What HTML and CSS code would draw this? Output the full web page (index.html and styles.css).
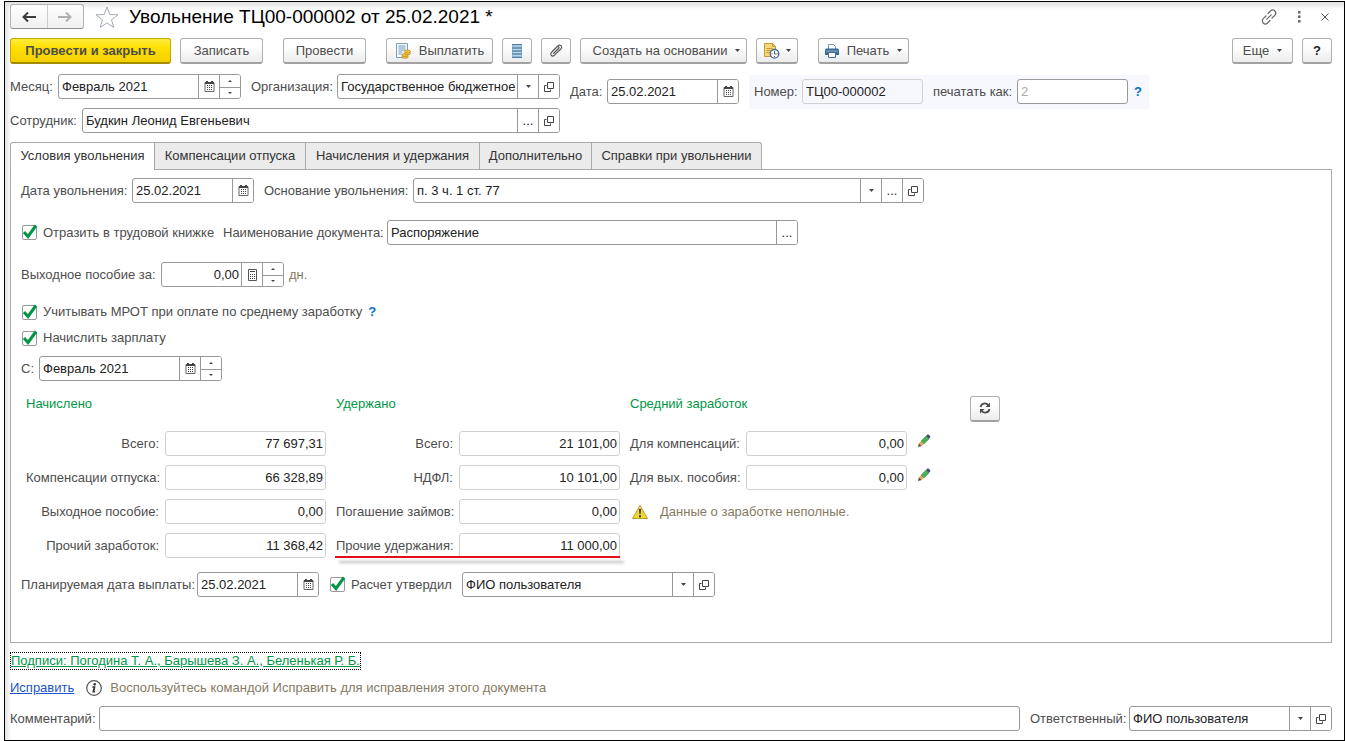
FILE: index.html
```html
<!DOCTYPE html>
<html lang="ru">
<head>
<meta charset="utf-8">
<meta name="viewport" content="width=device-width, initial-scale=1">
<title>Увольнение ТЦ00-000002</title>
<link rel="stylesheet" href="styles.css">
</head>
<body>
<svg class="sprite" aria-hidden="true">
  <symbol id="i-cal" viewBox="0 0 11 11"><path d="M1 1.500h9v9H1z" fill="#fff" stroke="#666"/><path d="M1 1h9v2H1zM2 0h2v2H2zM7 0h2v2H7z" fill="#444"/><path d="M3 4h1v1H3zM5 4h1v1H5zM7 4h1v1H7zM3 6h1v1H3zM5 6h1v1H5zM7 6h1v1H7zM3 8h1v1H3zM5 8h1v1H5zM7 8h1v1H7z" fill="#444"/></symbol>
  <symbol id="i-calc" viewBox="0 0 11 12"><path d="M1.500.5h8v11h-8z" fill="#fff" stroke="#555"/><path d="M3 2h5v1H3zM3 5h1v1H3zM5 5h1v1H5zM7 5h1v1H7zM3 7h1v1H3zM5 7h1v1H5zM7 7h1v1H7zM3 9h1v1H3zM5 9h1v1H5zM7 9h1v1H7z" fill="#444"/></symbol>
  <symbol id="i-open" viewBox="0 0 10 10"><path d="M3.500.5h6v6h-6z" fill="none" stroke="#444"/><path d="M2.500 3.500h-2v6h6v-2" fill="none" stroke="#444"/></symbol>
  <symbol id="i-down" viewBox="0 0 5 3"><path d="M0 0h5L2.500 3z" fill="#444"/></symbol>
  <symbol id="i-tick" viewBox="0 0 17 17"><path d="M3 8l4 4.500L15 1.500" fill="none" stroke="#009646" stroke-width="3"/></symbol>
  <symbol id="i-pencil" viewBox="0 0 14 14"><path d="M1 13l1-4 3 3z" fill="#5b4a3c"/><path d="M2 9.500L4 7l3 3-2.500 2z" fill="#eba757"/><path d="M4 7l5-5 3 3-5 5z" fill="#4caf57" stroke="#37914a" stroke-width=".5"/><path d="M9 2l1.500-1.500Q11 0 12 1l1 1q1 1 0 1.500L12 5z" fill="#41506b"/></symbol>
</svg>
<main class="window">
  <header class="titlebar">
    <div class="nav">
      <button type="button" aria-label="Назад"><svg width="14" height="10" viewBox="0 0 14 10"><path d="M6 .5L1.500 5 6 9.500M2 5h12" fill="none" stroke="#3c3c3c" stroke-width="2"/></svg></button>
      <button type="button" aria-label="Вперед"><svg width="14" height="10" viewBox="0 0 14 10"><path d="M8 .5L12.500 5 8 9.500M12 5H0" fill="none" stroke="#b0b0b0" stroke-width="2"/></svg></button>
    </div>
    <svg class="star" width="24" height="22" viewBox="0 0 24 22"><path d="M12 1l2.800 7.500 8.200.3-6.500 5 2.300 7.600L12 16.900l-6.800 4.500 2.300-7.600-6.500-5 8.200-.3z" fill="#fff" stroke="#a3acb5"/></svg>
    <h1>Увольнение ТЦ00-000002 от 25.02.2021 *</h1>
    <div class="winicons">
      <button type="button" aria-label="Ссылка"><svg width="16" height="16" viewBox="0 0 16 16"><g fill="none" stroke="#666" stroke-width="1.200" stroke-linecap="round"><path d="M7 4.500l2.500-2.500a3 3 0 0 1 4.300 4.300L11 9"/><path d="M9 11.500L6.500 14a3 3 0 0 1-4.300-4.300L5 7"/><path d="M5.800 10.200l4.400-4.400"/></g></svg></button>
      <button type="button" aria-label="Меню"><svg width="4" height="12" viewBox="0 0 4 12"><path d="M1 0h2.500v2.500H1zM1 4.500h2.500V7H1zM1 9h2.500v2.500H1z" fill="#666"/></svg></button>
      <button type="button" aria-label="Закрыть"><svg width="8" height="8" viewBox="0 0 8 8"><path d="M.5.5l7 7M7.500.5l-7 7" stroke="#555" fill="none"/></svg></button>
    </div>
  </header>

  <div class="toolbar">
    <div class="group">
      <button type="button" class="btn primary">Провести и закрыть</button>
      <button type="button" class="btn medium">Записать</button>
    </div>
    <button type="button" class="btn medium">Провести</button>
    <div class="group">
      <button type="button" class="btn pay"><svg width="16" height="16" viewBox="0 0 16 16"><path d="M1.500.5h11v14h-11z" fill="#f3f9fd" stroke="#7f9fb6"/><path d="M3.500 3h7M3.500 5h7M3.500 7h7M3.500 9h4M3.500 11h3" stroke="#6f9bbb"/><g fill="#f5c542" stroke="#b98416" stroke-width=".7"><ellipse cx="10" cy="13.800" rx="3.200" ry="1.500"/><ellipse cx="10" cy="12" rx="3.200" ry="1.500"/><ellipse cx="12.500" cy="10.300" rx="3" ry="1.500"/><ellipse cx="12.500" cy="8.500" rx="3" ry="1.500"/></g></svg>Выплатить</button>
      <button type="button" class="btn square" aria-label="Реестр"><svg width="10" height="14" viewBox="0 0 10 14"><path d="M0 0h10v14H0z" fill="#8fb6d3"/><path d="M0 .5h10M0 4h10M0 7h10M0 10h10M0 13.500h10" stroke="#4d7ea6"/><path d="M1 2h8M1 5.500h8M1 8.500h8M1 11.500h8" stroke="#b9d6ea"/></svg></button>
      <button type="button" class="btn square" aria-label="Файлы"><svg width="14" height="14" viewBox="0 0 14 14"><path d="M4.500 9.500l5-5q1-1 .2-1.700t-1.800.2L2.700 8.200q-1.600 1.800-.4 3.200t3.200-.2l6.200-6.200q1.800-1.900.3-3.300t-3.400.4L3.500 7.200" fill="none" stroke="#555" stroke-width="1.100" stroke-linecap="round"/></svg></button>
      <button type="button" class="btn create">Создать на основании<svg width="5" height="3"><use href="#i-down"/></svg></button>
      <button type="button" class="btn history" aria-label="Напоминания"><svg width="17" height="16" viewBox="0 0 17 16"><path d="M1.500.5h8l3 3v10h-11z" fill="#f6d778" stroke="#c09a3c"/><path d="M9.500.5v3h3M3.500 5.500h6M3.500 7.500h4M3.500 9.500h3" fill="none" stroke="#c09a3c"/><circle cx="11.500" cy="10.800" r="4.300" fill="#fff" stroke="#3f6c9c" stroke-width="1.300"/><path d="M11.500 8v3h2" fill="none" stroke="#3f6c9c"/><path d="M8.500 10.300h1v1h-1zM11 13h1v1h-1zM13.800 10.300h1v1h-1z" fill="#e23"/></svg><svg width="5" height="3"><use href="#i-down"/></svg></button>
    </div>
    <button type="button" class="btn print"><svg width="14" height="14" viewBox="0 0 14 14"><path d="M3.500 5V.5h5l2 2V5" fill="#fff" stroke="#7795ad"/><path d="M1 4.500h12l1 1V11H0V5.500z" fill="#3d6b93"/><path d="M1 7h12" stroke="#8db2d0"/><path d="M3.500 8.500h7v5h-7z" fill="#fff" stroke="#4a6d8c"/></svg>Печать<svg width="5" height="3"><use href="#i-down"/></svg></button>
    <div class="group end">
      <button type="button" class="btn more">Еще<svg width="5" height="3"><use href="#i-down"/></svg></button>
      <button type="button" class="btn square help">?</button>
    </div>
  </div>

  <section class="head">
    <div class="head-main">
      <div class="line line-month">
        <label for="month">Месяц:</label>
        <div class="field"><input id="month" value="Февраль 2021"><button type="button" aria-label="Календарь"><svg width="11" height="11"><use href="#i-cal"/></svg></button><span class="spin"><button type="button" aria-label="Больше"></button><button type="button" aria-label="Меньше"></button></span></div>
        <label for="org" class="next">Организация:</label>
        <div class="field"><span class="combo"><select id="org"><option>Государственное бюджетное</option></select><span class="arrow"><svg width="5" height="3"><use href="#i-down"/></svg></span></span><button type="button" aria-label="Открыть"><svg width="10" height="10"><use href="#i-open"/></svg></button></div>
      </div>
      <div class="line line-person">
        <label for="person">Сотрудник:</label>
        <div class="field"><input id="person" value="Будкин Леонид Евгеньевич"><button type="button">...</button><button type="button" aria-label="Открыть"><svg width="10" height="10"><use href="#i-open"/></svg></button></div>
      </div>
    </div>
    <div class="line line-date">
      <label for="date">Дата:</label>
      <div class="field"><input id="date" value="25.02.2021"><button type="button" aria-label="Календарь"><svg width="11" height="11"><use href="#i-cal"/></svg></button></div>
    </div>
    <div class="line line-number">
      <label for="num">Номер:</label>
      <div class="field soft"><input id="num" value="ТЦ00-000002" readonly></div>
      <label for="printas" class="next">печатать как:</label>
      <div class="field"><input id="printas" placeholder="2"></div>
      <a class="hint" href="#">?</a>
    </div>
  </section>

  <nav class="tabs" role="tablist">
    <button type="button" role="tab" class="active" aria-selected="true">Условия увольнения</button>
    <button type="button" role="tab">Компенсации отпуска</button>
    <button type="button" role="tab">Начисления и удержания</button>
    <button type="button" role="tab">Дополнительно</button>
    <button type="button" role="tab">Справки при увольнении</button>
  </nav>

  <section class="panel">
    <div class="line line-dismiss">
      <label for="ddate">Дата увольнения:</label>
      <div class="field"><input id="ddate" value="25.02.2021"><button type="button" aria-label="Календарь"><svg width="11" height="11"><use href="#i-cal"/></svg></button></div>
      <label for="reason" class="next">Основание увольнения:</label>
      <div class="field"><span class="combo"><select id="reason"><option>п. 3 ч. 1 ст. 77</option></select><span class="arrow"><svg width="5" height="3"><use href="#i-down"/></svg></span></span><button type="button">...</button><button type="button" aria-label="Открыть"><svg width="10" height="10"><use href="#i-open"/></svg></button></div>
    </div>
    <div class="line line-book">
      <label class="check"><span class="box"><input type="checkbox" checked><svg width="17" height="17"><use href="#i-tick"/></svg></span>Отразить в трудовой книжке</label>
      <label for="doc" class="next">Наименование документа:</label>
      <div class="field"><input id="doc" value="Распоряжение"><button type="button">...</button></div>
    </div>
    <div class="line line-severance">
      <label for="sev">Выходное пособие за:</label>
      <div class="field num"><input id="sev" value="0,00"><button type="button" aria-label="Калькулятор"><svg width="11" height="12"><use href="#i-calc"/></svg></button><span class="spin"><button type="button" aria-label="Больше"></button><button type="button" aria-label="Меньше"></button></span></div>
      <span class="unit">дн.</span>
    </div>
    <div class="checks">
      <div class="inline"><label class="check"><span class="box"><input type="checkbox" checked><svg width="17" height="17"><use href="#i-tick"/></svg></span>Учитывать МРОТ при оплате по среднему заработку</label><a class="hint" href="#">?</a></div>
      <label class="check"><span class="box"><input type="checkbox" checked><svg width="17" height="17"><use href="#i-tick"/></svg></span>Начислить зарплату</label>
    </div>
    <div class="line line-from">
      <label for="from">С:</label>
      <div class="field"><input id="from" value="Февраль 2021"><button type="button" aria-label="Календарь"><svg width="11" height="11"><use href="#i-cal"/></svg></button><span class="spin"><button type="button" aria-label="Больше"></button><button type="button" aria-label="Меньше"></button></span></div>
    </div>

    <div class="totals">
      <h2 class="c1">Начислено</h2><h2 class="c3">Удержано</h2><h2 class="c5">Средний заработок</h2>
      <button type="button" class="btn square refresh" aria-label="Обновить"><svg width="12" height="12" viewBox="0 0 12 12"><path d="M1.500 5a4.300 4.300 0 0 1 7.800-1.700M10.500 7a4.300 4.300 0 0 1-7.800 1.700" fill="none" stroke="#4d4d4d" stroke-width="1.800"/><path d="M11 .5V5H6.500zM1 11.500V7h4.500z" fill="#4d4d4d"/></svg></button>

      <label class="c1" for="a1">Всего:</label><div class="field soft num"><input id="a1" value="77 697,31" readonly></div>
      <label class="c3" for="b1">Всего:</label><div class="field soft num"><input id="b1" value="21 101,00" readonly></div>
      <label class="c5" for="e1">Для компенсаций:</label><div class="field soft num"><input id="e1" value="0,00" readonly></div>
      <button type="button" class="edit" aria-label="Изменить"><svg width="14" height="14"><use href="#i-pencil"/></svg></button>

      <label class="c1" for="a2">Компенсации отпуска:</label><div class="field soft num"><input id="a2" value="66 328,89" readonly></div>
      <label class="c3" for="b2">НДФЛ:</label><div class="field soft num"><input id="b2" value="10 101,00" readonly></div>
      <label class="c5" for="e2">Для вых. пособия:</label><div class="field soft num"><input id="e2" value="0,00" readonly></div>
      <button type="button" class="edit" aria-label="Изменить"><svg width="14" height="14"><use href="#i-pencil"/></svg></button>

      <label class="c1" for="a3">Выходное пособие:</label><div class="field soft num"><input id="a3" value="0,00" readonly></div>
      <label class="c3" for="b3">Погашение займов:</label><div class="field soft num"><input id="b3" value="0,00" readonly></div>
      <p class="warning"><svg width="16" height="14" viewBox="0 0 16 14"><path d="M8 .7L15.500 13.500H.5z" fill="#f4d835" stroke="#b9a02c" stroke-linejoin="round"/><path d="M7 4h2l-.4 5H7.400zM7 10.300h2v2H7z" fill="#333"/></svg>Данные о заработке неполные.</p>

      <label class="c1" for="a4">Прочий заработок:</label><div class="field soft num"><input id="a4" value="11 368,42" readonly></div>
      <label class="c3 last" for="b4">Прочие удержания:</label><div class="field soft num c4 last"><input id="b4" value="11 000,00" readonly></div>
      <span class="marker"></span>
    </div>

    <div class="line line-pay">
      <label for="pdate">Планируемая дата выплаты:</label>
      <div class="field"><input id="pdate" value="25.02.2021"><button type="button" aria-label="Календарь"><svg width="11" height="11"><use href="#i-cal"/></svg></button></div>
      <label class="check next"><span class="box"><input type="checkbox" checked><svg width="17" height="17"><use href="#i-tick"/></svg></span>Расчет утвердил</label>
      <div class="field"><span class="combo"><select aria-label="Расчет утвердил"><option>ФИО пользователя</option></select><span class="arrow"><svg width="5" height="3"><use href="#i-down"/></svg></span></span><button type="button" aria-label="Открыть"><svg width="10" height="10"><use href="#i-open"/></svg></button></div>
    </div>
  </section>

  <footer class="footer">
    <a class="signs" href="#">Подписи: Погодина Т. А., Барышева З. А., Беленькая Р. Б.</a>
    <div class="fix">
      <a href="#">Исправить</a>
      <svg width="16" height="16" viewBox="0 0 16 16"><circle cx="8" cy="8" r="7.300" fill="#fff" stroke="#555" stroke-width="1.200"/><circle cx="8.700" cy="4.300" r="1.300" fill="#333"/><path d="M6.300 7h2.200l-1.100 4.700h1.700" fill="none" stroke="#333" stroke-width="1.700"/></svg>
      <span>Воспользуйтесь командой Исправить для исправления этого документа</span>
    </div>
    <div class="line line-comment">
      <label for="comment">Комментарий:</label>
      <div class="field"><input id="comment"></div>
      <label for="resp" class="next">Ответственный:</label>
      <div class="field"><span class="combo"><select id="resp"><option>ФИО пользователя</option></select><span class="arrow"><svg width="5" height="3"><use href="#i-down"/></svg></span></span><button type="button" aria-label="Открыть"><svg width="10" height="10"><use href="#i-open"/></svg></button></div>
    </div>
  </footer>
</main>
</body>
</html>
```

FILE: styles.css
```css
* { box-sizing: border-box; }

body {
  margin: 0;
  padding: 1px 0 0 4px;
  background: #fff;
  color: #4d4d4d;
  font: 13px/18px "Liberation Sans", Arial, sans-serif;
}

button, input, select { font: inherit; color: inherit; margin: 0; }
button { padding: 0; cursor: pointer; }
svg { display: block; flex: none; }
label, h1, h2, p { margin: 0; white-space: nowrap; }
.sprite { position: absolute; width: 0; height: 0; }

.window {
  display: flex;
  flex-direction: column;
  min-height: calc(100vh - 1px);
  padding: 2px 12px 9px 5px;
  border: 1px solid #000;
  box-shadow: inset 3px 4px 5px #e2e2e2;
}

/* Title */
.titlebar { display: flex; align-items: center; height: 25px; }
.nav {
  display: flex;
  width: 74px;
  height: 25px;
  border: 1px solid #b3b3b3;
  border-bottom-color: #8f8f8f;
  border-radius: 3px;
  background: linear-gradient(#fff, #f0f0f0);
}
.nav button { display: grid; place-items: center; flex: 1; border: 0; background: none; }
.nav button + button { border-left: 1px solid #ccc; }
.star { margin: 0 10px 0 11px; }
h1 { color: #000; font-size: 19px; font-weight: 400; line-height: 25px; }
.winicons { display: flex; align-items: center; gap: 20px; margin-left: auto; padding-right: 3px; }
.winicons button { border: 0; background: none; }

/* Toolbar */
.toolbar { display: flex; gap: 20px; margin-top: 9px; }
.group { display: flex; gap: 9px; }
.end { margin-left: auto; }
.btn {
  display: flex;
  align-items: center;
  justify-content: center;
  gap: 8px;
  height: 26px;
  border: 1px solid #b0b0b0;
  border-bottom: 2px solid #a2a2a2;
  border-radius: 3px;
  background: linear-gradient(#fff 30%, #ececec);
  white-space: nowrap;
}
.primary {
  width: 161px;
  border-color: #c7a800 #c7a800 #a58b00;
  background: linear-gradient(#ffec3d, #ffdf00 40%, #f2d000);
  font-weight: 700;
}
.medium { width: 83px; }
.pay { width: 107px; }
.square { width: 30px; }
.create { width: 167px; padding-left: 6px; }
.history { width: 42px; gap: 6px; }
.print { width: 91px; }
.more { width: 61px; }
.help { color: #222; font-weight: 700; }

/* Fields */
.line { display: grid; align-items: center; justify-content: start; }
.next { padding-left: 10px; }
.field {
  display: flex;
  min-width: 0;
  height: 25px;
  border: 1px solid #999;
  border-radius: 3px;
  background: #fff;
  color: #222;
  overflow: hidden;
}
.field input, .field select {
  flex: 1;
  width: 100%;
  min-width: 0;
  height: 23px;
  padding: 0 3px;
  border: 0;
  outline: 0;
  background: none;
  appearance: none;
}
.field input::placeholder { color: #aaa; }
.field > button, .arrow {
  display: grid;
  place-items: center;
  flex: none;
  width: 21px;
  border: 0;
  border-left: 1px solid #999;
  background: #fff;
}
.combo { display: grid; grid-template-columns: 1fr 21px; flex: 1; min-width: 0; }
.combo select { grid-area: 1 / 1 / 2 / 3; }
.arrow { grid-area: 1 / 2; pointer-events: none; }
.spin { display: grid; grid-template-rows: 1fr 1fr; width: 21px; border-left: 1px solid #999; }
.spin button { display: grid; place-items: center; border: 0; background: #fff; }
.spin button + button { border-top: 1px solid #999; }
.spin button::before { content: ""; border: 2px solid transparent; border-top: 0; border-bottom: 2px solid #444; }
.spin button + button::before { border-top: 2px solid #444; border-bottom: 0; }
.soft { border-color: #d0d0d0; background: none; }
.num input { padding-right: 2px; text-align: right; }
.hint { color: #0072c6; font-weight: 700; text-decoration: none; }

.check { display: flex; align-items: center; gap: 4px; }
.box { display: grid; }
.box > * { grid-area: 1 / 1; }
.box input {
  align-self: center;
  width: 15px;
  height: 15px;
  margin: 0 2px 0 1px;
  border: 1px solid #999;
  border-radius: 2px;
  background: #fff;
  appearance: none;
}
.box svg { pointer-events: none; }

/* Document header */
.head { display: flex; align-items: flex-start; gap: 10px; margin-top: 10px; }
.head-main { display: grid; gap: 9px; }
.line-month { grid-template-columns: 48px 183px 96px 223px; }
.line-person { grid-template-columns: 72px 478px; }
.line-date { grid-template-columns: 37px 132px; padding-top: 5px; }
.line-number {
  grid-template-columns: 48px 121px 94px 111px auto;
  margin-top: 1px;
  padding: 4px 7px 5px 5px;
  background: #f7f8fd;
}
.line-number .hint { padding-left: 6px; }

/* Tabs */
.tabs {
  display: grid;
  grid-template-columns: 145px 151px 174px 112px 170px;
  margin-top: 9px;
}
.tabs button {
  height: 27px;
  border: 1px solid #aaa;
  border-bottom: 0;
  border-left: 0;
  background: #ebebeb;
  color: #333;
  white-space: nowrap;
}
.tabs .active {
  z-index: 1;
  height: 28px;
  margin-bottom: -1px;
  padding-bottom: 1px;
  border-left: 1px solid #aaa;
  border-radius: 3px 0 0;
  background: #fff;
}
.tabs button:last-child { border-radius: 0 3px 0 0; }
.panel {
  flex: 1;
  padding: 8px 10px 10px;
  border: 1px solid #aaa;
}
.line-dismiss { grid-template-columns: 111px 122px 159px 511px; }
.line-book { grid-template-columns: 192px 174px 411px; margin-top: 17px; }
.line-severance { grid-template-columns: 140px 123px auto; margin-top: 17px; }
.unit { padding-left: 5px; color: #857b63; }
.checks { display: grid; gap: 8px; margin-top: 16px; }
.inline { display: flex; align-items: center; gap: 6px; }
.line-from { grid-template-columns: 18px 183px; margin-top: 9px; }

/* Totals */
.totals {
  display: grid;
  grid-template-columns: 139px 161px 133px 161px 126px 161px 63px 30px;
  grid-template-rows: 27px;
  grid-auto-rows: 25px;
  gap: 9px 0;
  align-items: center;
  justify-content: start;
  margin: 14px 0 0 5px;
}
.totals h2 { grid-row: 1; align-self: start; color: #009646; font-size: 13px; font-weight: 400; line-height: 18px; }
.c1 { grid-column: 1; }
.c3 { grid-column: 3; padding-left: 10px; }
.c4 { grid-column: 4; }
.c5 { grid-column: 5; padding-left: 10px; }
.last { grid-row: 5; }
.totals label { padding-right: 6px; text-align: right; }
.totals label.c5 { padding-right: 0; text-align: left; }
.refresh { grid-area: 1 / 8; }
.edit { justify-self: start; margin: 0 0 6px 10px; border: 0; background: none; }
.warning { display: flex; align-items: center; gap: 12px; grid-column: 5 / 8; padding-left: 12px; color: #857b63; }
.marker {
  grid-area: 5 / 3 / 6 / 5;
  align-self: end;
  height: 2px;
  margin-left: 9px;
  background: #e3101b;
  box-shadow: 4px 5px 3px #bbb;
}

.line-pay { grid-template-columns: 176px 122px 143px 253px; margin-top: 14px; }

/* Footer */
.footer { display: grid; }
.signs {
  justify-self: start;
  margin-top: 9px;
  border: 1px dotted #000;
  color: #009646;
  line-height: 16px;
}
.fix { display: flex; align-items: center; gap: 12px; margin: 9px 0; color: #857b63; }
.fix a { color: #1a56c4; }
.fix svg { margin-right: -4px; }
.line-comment { grid-template-columns: 89px 1fr 109px 203px; justify-content: stretch; }
```
